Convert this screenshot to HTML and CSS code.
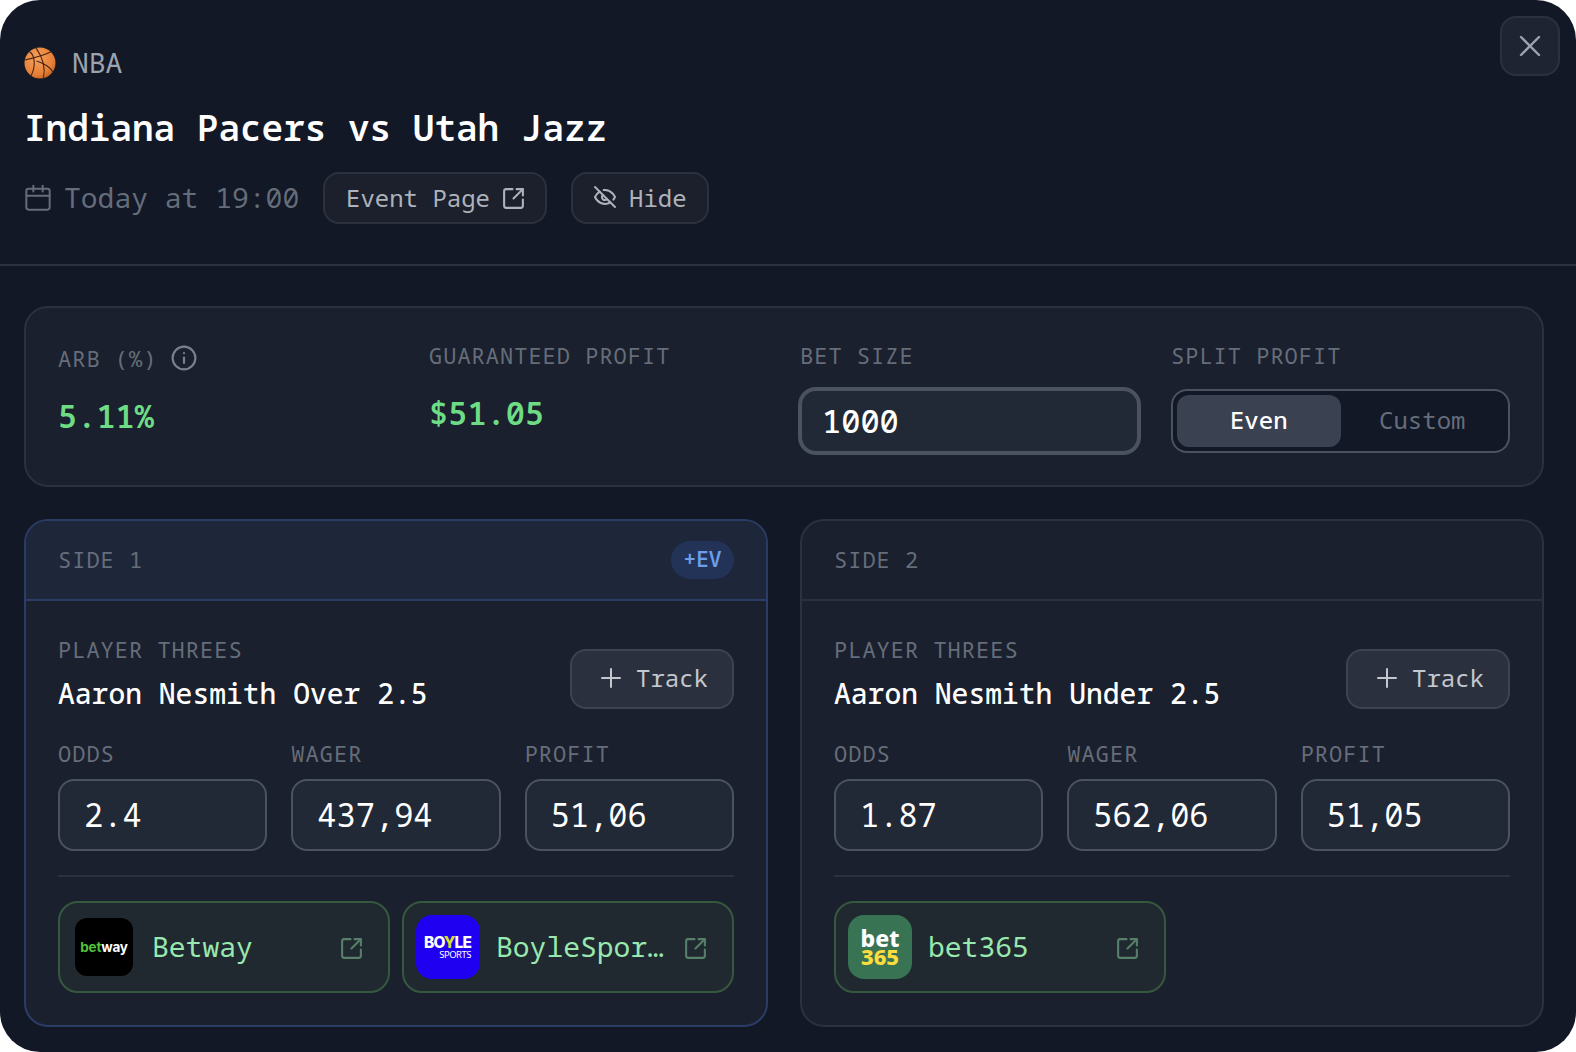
FILE: index.html
```html
<!DOCTYPE html>
<html lang="en">

<head>
    <meta charset="UTF-8" />
    <meta name="viewport" content="width=device-width, initial-scale=1.0" />
    <title>Indiana Pacers vs Utah Jazz</title>
    <link rel="stylesheet" href="styles.css">
</head>

<body>

    <svg class="sprite" aria-hidden="true">
        <symbol id="i-external" viewBox="0 0 24 24">
            <path d="M21 13v6a2 2 0 0 1-2 2H5a2 2 0 0 1-2-2V5a2 2 0 0 1 2-2h6" />
            <path d="M21 3l-9 9" />
            <path d="M15 3h6v6" />
        </symbol>
        <symbol id="i-plus" viewBox="0 0 24 24">
            <path d="M12 3v18" />
            <path d="M3 12h18" />
        </symbol>
    </svg>

    <div class="modal">
        <button class="close" aria-label="Close">
            <svg class="icon close_icon" viewBox="0 0 24 24">
                <path d="M3 3l18 18" />
                <path d="M21 3L3 21" />
            </svg>
        </button>

        <header class="head">
            <div class="league">
                <svg class="ball" viewBox="0 0 32 32">
                    <defs>
                        <radialGradient id="ballFill" cx="0.4" cy="0.35" r="0.75">
                            <stop offset="0" stop-color="#f6a25e" />
                            <stop offset="0.7" stop-color="#e67f35" />
                            <stop offset="1" stop-color="#b9591f" />
                        </radialGradient>
                    </defs>
                    <circle cx="16" cy="16" r="15.5" fill="url(#ballFill)" />
                    <g fill="none" stroke="#4a2412" stroke-width="1.1">
                        <path d="M12 .9C17 8 22 19 19.5 31" />
                        <path d="M.7 13C10 11 21 8 27 4.8" />
                        <path d="M5.5 4.8C11 8 12 19 7 29" />
                        <path d="M12.5 14C20 16 27 21 29 25" />
                    </g>
                </svg>
                <span class="league_name">NBA</span>
            </div>
            <h1 class="title">Indiana Pacers vs Utah Jazz</h1>
            <div class="meta">
                <span class="date">
                    <svg class="icon date_icon" viewBox="0 0 24 24">
                        <rect x="2" y="4" width="20" height="18" rx="2" />
                        <path d="M16 1.5v5" />
                        <path d="M8 1.5v5" />
                        <path d="M2 10h20" />
                    </svg>
                    Today at 19:00
                </span>
                <a class="pill pill_event">Event Page
                    <svg class="icon icon_ext"><use href="#i-external" /></svg>
                </a>
                <a class="pill pill_hide">
                    <svg class="icon icon_24" viewBox="0 0 24 24">
                        <path d="M9.88 9.88a3 3 0 1 0 4.24 4.24" />
                        <path d="M10.73 5.08A10.43 10.43 0 0 1 12 5c7 0 10 7 10 7a13.16 13.16 0 0 1-1.67 2.68" />
                        <path d="M6.61 6.61A13.526 13.526 0 0 0 2 12s3 7 10 7a9.74 9.74 0 0 0 5.39-1.61" />
                        <path d="M2 2l20 20" />
                    </svg>
                    Hide
                </a>
            </div>
        </header>

        <main class="content">
            <section class="stats">
                <div class="stat">
                    <div class="label label_info">ARB (%)
                        <svg class="icon info_icon" viewBox="0 0 24 24">
                            <circle cx="12" cy="12" r="10.5" />
                            <path d="M12 16.5v-5" />
                            <path d="M12 7.5h.01" />
                        </svg>
                    </div>
                    <div class="value">5.11%</div>
                </div>
                <div class="stat">
                    <div class="label">GUARANTEED PROFIT</div>
                    <div class="value">$51.05</div>
                </div>
                <div class="stat">
                    <div class="label">BET SIZE</div>
                    <input class="bet_input" type="text" value="1000" />
                </div>
                <div class="stat">
                    <div class="label">SPLIT PROFIT</div>
                    <div class="split">
                        <button class="split_btn split_active">Even</button>
                        <button class="split_btn">Custom</button>
                    </div>
                </div>
            </section>

            <section class="sides">
                <article class="side side_ev">
                    <div class="side_head">
                        <span class="label">SIDE 1</span>
                        <span class="badge">+EV</span>
                    </div>
                    <div class="side_body">
                        <div class="market">
                            <div>
                                <div class="label">PLAYER THREES</div>
                                <div class="selection">Aaron Nesmith Over 2.5</div>
                            </div>
                            <button class="track">
                                <svg class="icon icon_24"><use href="#i-plus" /></svg>
                                Track
                            </button>
                        </div>
                        <div class="fields">
                            <label class="field"><span class="label">ODDS</span><input class="num" type="text" value="2.4" /></label>
                            <label class="field"><span class="label">WAGER</span><input class="num" type="text" value="437,94" /></label>
                            <label class="field"><span class="label">PROFIT</span><input class="num" type="text" value="51,06" /></label>
                        </div>
                        <div class="books">
                            <a class="book">
                                <span class="logo logo_betway"><span class="logo_green">bet</span>way</span>
                                <span class="book_name">Betway</span>
                                <svg class="icon icon_ext"><use href="#i-external" /></svg>
                            </a>
                            <a class="book">
                                <span class="logo logo_boyle">
                                    <span class="boyle_top">BO<span class="boyle_y">Y</span>LE</span>
                                    <span class="boyle_sub">SPORTS</span>
                                </span>
                                <span class="book_name">BoyleSports</span>
                                <svg class="icon icon_ext"><use href="#i-external" /></svg>
                            </a>
                        </div>
                    </div>
                </article>

                <article class="side">
                    <div class="side_head">
                        <span class="label">SIDE 2</span>
                    </div>
                    <div class="side_body">
                        <div class="market">
                            <div>
                                <div class="label">PLAYER THREES</div>
                                <div class="selection">Aaron Nesmith Under 2.5</div>
                            </div>
                            <button class="track">
                                <svg class="icon icon_24"><use href="#i-plus" /></svg>
                                Track
                            </button>
                        </div>
                        <div class="fields">
                            <label class="field"><span class="label">ODDS</span><input class="num" type="text" value="1.87" /></label>
                            <label class="field"><span class="label">WAGER</span><input class="num" type="text" value="562,06" /></label>
                            <label class="field"><span class="label">PROFIT</span><input class="num" type="text" value="51,05" /></label>
                        </div>
                        <div class="books">
                            <a class="book">
                                <span class="logo logo_365">
                                    <span class="b365_top">bet</span>
                                    <span class="b365_num">365</span>
                                </span>
                                <span class="book_name">bet365</span>
                                <svg class="icon icon_ext"><use href="#i-external" /></svg>
                            </a>
                        </div>
                    </div>
                </article>
            </section>
        </main>
    </div>

</body>

</html>
```

FILE: styles.css
```css
:root {
    --back: #121826;
    --card: #1a202d;
    --line: #2b313d;
    --field: #222936;
    --field-line: #4b5260;
    --muted: #666d7a;
    --soft: #9ca3af;
    --green: #6edb85;
}

* {
    box-sizing: border-box;
    font-family: "Noto Sans Mono", "DejaVu Sans Mono", monospace;
}

body {
    margin: 0;
    padding: 0;
    background-color: #fff;
}

.sprite {
    display: none;
}

.icon {
    display: block;
    flex-shrink: 0;
    fill: none;
    stroke: currentColor;
    stroke-width: 2;
    stroke-linecap: round;
    stroke-linejoin: round;
}

.icon_ext {
    width: 25px;
    height: 25px;
    margin: 2px -2px 0 -3px;
}

.icon_24 {
    width: 24px;
    height: 24px;
}

.modal {
    width: 1576px;
    height: 1052px;
    background-color: var(--back);
    border-radius: 40px;
    position: relative;
    overflow: hidden;
}

.close {
    position: absolute;
    top: 16px;
    right: 16px;
    width: 60px;
    height: 60px;
    padding: 0;
    display: flex;
    align-items: center;
    justify-content: center;
    background-color: #1e2431;
    border: 2px solid var(--line);
    border-radius: 16px;
    color: var(--soft);
}

.close_icon {
    width: 24px;
    height: 24px;
    stroke-width: 2.4;
}

/* header */

.head {
    padding: 47px 24px 40px;
    border-bottom: 2px solid var(--line);
    height: 266px;
}

.league {
    display: flex;
    align-items: center;
    gap: 16px;
    height: 32px;
}

.ball {
    width: 32px;
    height: 32px;
}

.league_name {
    font-size: 28px;
    line-height: 30px;
    padding-bottom: 2px;
    color: var(--soft);
}

.title {
    margin: 25px 0 20px;
    font-size: 36px;
    line-height: 48px;
    font-weight: 600;
    color: #fff;
}

.meta {
    display: flex;
    align-items: center;
    height: 52px;
}

.date {
    display: flex;
    align-items: center;
    gap: 12px;
    width: 299px;
    padding-bottom: 2px;
    font-size: 28px;
    color: var(--muted);
}

.date_icon {
    width: 28px;
    height: 28px;
    stroke-width: 1.7;
    margin-top: 2px;
}

.pill {
    display: flex;
    align-items: center;
    height: 52px;
    padding-bottom: 2px;
    background-color: #1b202c;
    border: 2px solid var(--line);
    border-radius: 16px;
    font-size: 24px;
    color: #aeb2ba;
}

.pill_event {
    width: 224px;
    padding-left: 21px;
    gap: 14px;
    margin-right: 24px;
}

.pill_hide {
    width: 138px;
    padding-left: 20px;
    gap: 12px;
}

/* main */

.content {
    padding: 40px 32px 26px 24px;
}

.label {
    font-size: 22px;
    line-height: 28px;
    letter-spacing: 1px;
    color: var(--muted);
    white-space: nowrap;
}

.stats {
    display: grid;
    grid-template-columns: repeat(4, 1fr);
    gap: 32px;
    height: 181px;
    padding: 32px;
    background-color: var(--card);
    border: 2px solid var(--line);
    border-radius: 24px;
}

.stat .label {
    line-height: 31px;
    margin-bottom: 18px;
}

.stat .label_info {
    display: flex;
    align-items: center;
    gap: 14px;
    height: 36px;
    line-height: 34px;
    margin-bottom: 16px;
}

.info_icon {
    width: 26px;
    height: 26px;
    color: #7a808c;
}

.value {
    font-size: 32px;
    line-height: 48px;
    font-weight: 600;
    color: var(--green);
}

.bet_input {
    display: block;
    width: 100%;
    height: 64px;
    padding: 0 20px 2px;
    font-size: 32px;
    font-weight: 500;
    color: #fff;
    background-color: var(--field);
    border: 2px solid var(--field-line);
    box-shadow: 0 0 0 2px var(--field-line);
    border-radius: 16px;
    outline: 0;
}

.split {
    display: flex;
    height: 64px;
    padding: 4px;
    background-color: var(--back);
    border: 2px solid var(--field-line);
    border-radius: 16px;
}

.split_btn {
    flex: 1;
    padding: 0 0 3px;
    font-size: 24px;
    background: none;
    border: 0;
    border-radius: 12px;
    color: var(--muted);
}

.split_active {
    background-color: #3a4151;
    color: #fff;
    font-weight: 500;
}

.sides {
    display: grid;
    grid-template-columns: 1fr 1fr;
    gap: 32px;
    margin-top: 32px;
}

.side {
    height: 508px;
    background-color: var(--card);
    border: 2px solid var(--line);
    border-radius: 24px;
    overflow: hidden;
}

.side_ev {
    border-color: #2b3c66;
}

.side_head {
    display: flex;
    align-items: center;
    justify-content: space-between;
    height: 80px;
    padding: 0 32px;
    border-bottom: 2px solid var(--line);
}

.side_ev .side_head {
    background-color: #1e263a;
    border-bottom-color: #2b3c66;
}

.side_head .label {
    padding-bottom: 2px;
}

.badge {
    width: 63px;
    height: 38px;
    line-height: 37px;
    text-align: center;
    font-size: 21px;
    font-weight: 600;
    border-radius: 19px;
    background-color: #233257;
    color: #6d9eeb;
}

.side_body {
    padding: 34px 32px 0;
}

.market {
    display: flex;
    justify-content: space-between;
    align-items: flex-start;
    height: 79px;
}

.selection {
    margin-top: 9px;
    font-size: 28px;
    line-height: 42px;
    font-weight: 500;
    color: #fff;
    white-space: nowrap;
}

.track {
    display: flex;
    align-items: center;
    gap: 13px;
    width: 164px;
    height: 60px;
    margin-top: 14px;
    padding: 0 0 3px 27px;
    font-size: 24px;
    background-color: #2a303d;
    border: 2px solid #3c4351;
    border-radius: 16px;
    color: #c4c7cd;
}

.fields {
    display: grid;
    grid-template-columns: repeat(3, 1fr);
    gap: 24px;
    margin-top: 26px;
    padding-bottom: 24px;
    border-bottom: 2px solid var(--line);
}

.field {
    display: block;
}

.field .label {
    display: block;
    line-height: 27px;
    margin-bottom: 12px;
}

.num {
    display: block;
    width: 100%;
    height: 72px;
    padding: 0 24px 2px;
    font-size: 32px;
    color: #fff;
    background-color: var(--field);
    border: 2px solid var(--field-line);
    border-radius: 16px;
    outline: 0;
}

.books {
    display: grid;
    grid-template-columns: 1fr 1fr;
    gap: 12px;
    margin-top: 24px;
}

.book {
    display: flex;
    align-items: center;
    gap: 16px;
    min-width: 0;
    height: 92px;
    padding: 0 26px 0 12px;
    background-color: #20292f;
    border: 2px solid #36583f;
    border-radius: 20px;
    color: #56806a;
}

.book_name {
    flex: 1;
    min-width: 0;
    padding-bottom: 2px;
    font-size: 28px;
    color: #98e8b0;
    white-space: nowrap;
    overflow: hidden;
    text-overflow: ellipsis;
}

/* bookmaker logos */

.logo {
    display: flex;
    flex-direction: column;
    align-items: center;
    justify-content: center;
    flex-shrink: 0;
    width: 64px;
    height: 64px;
    border-radius: 16px;
    font-family: "Noto Sans", sans-serif;
}

.logo_betway {
    flex-direction: row;
    width: 58px;
    height: 58px;
    margin: 0 3px;
    border-radius: 12px;
    background-color: #000;
    color: #fff;
    font-size: 13.5px;
    font-weight: 700;
    font-family: Inter, sans-serif;
    letter-spacing: -0.2px;
}

.logo_green {
    color: #4fc437;
    font-family: inherit;
}

.logo_boyle {
    background-color: #1f00f0;
    color: #fff;
    align-items: flex-end;
    padding-right: 9px;
}

.boyle_top {
    font-family: Inter, sans-serif;
    font-size: 15.5px;
    line-height: 15px;
    font-weight: 800;
    letter-spacing: -0.9px;
}

.boyle_y {
    font-family: inherit;
    color: #d6e02c;
}

.boyle_sub {
    font-family: "Noto Sans", sans-serif;
    font-size: 9.5px;
    line-height: 10px;
    letter-spacing: -0.5px;
}

.logo_365 {
    background-color: #387354;
    font-weight: 800;
}

.b365_top {
    font-family: "Noto Sans", sans-serif;
    font-size: 23px;
    line-height: 19px;
    font-weight: 800;
    color: #fff;
}

.b365_num {
    font-family: "Noto Sans", sans-serif;
    font-size: 22px;
    line-height: 17px;
    font-weight: 800;
    color: #fcdc3f;
}
```
